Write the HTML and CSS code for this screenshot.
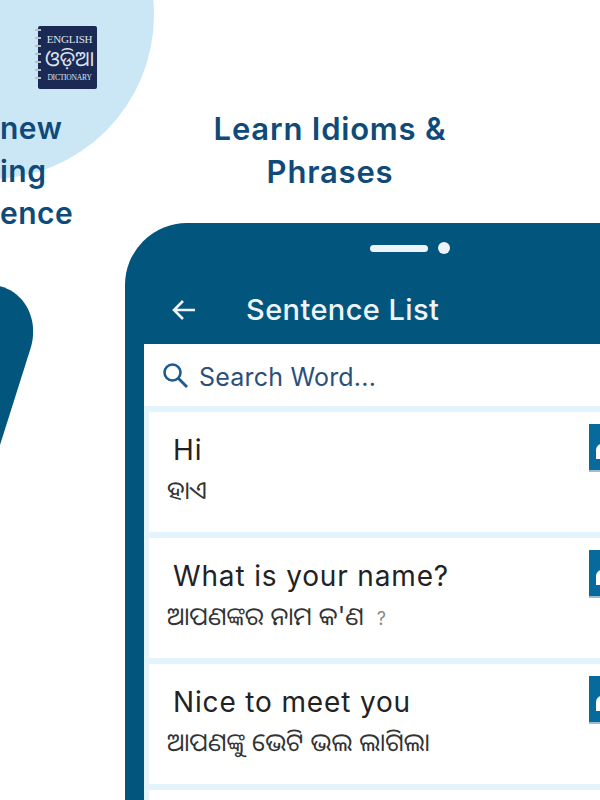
FILE: index.html
```html
<!DOCTYPE html>
<html lang="en">
<head>
    <meta charset="UTF-8">
    <meta name="viewport" content="width=device-width, initial-scale=1.0">
    <title>English Odia Dictionary</title>
    <link rel="stylesheet" href="styles.css">
</head>
<body>
    <div class="stage">
        <div class="circle"></div>
        <div class="prev-phone"></div>

        <div class="book">
            <div class="rings"><i></i><i></i><i></i><i></i><i></i><i></i><i></i></div>
            <div class="book-en">ENGLISH</div>
            <div class="book-or">ଓଡ଼ିଆ</div>
            <div class="book-dict">DICTIONARY</div>
        </div>

        <h2 class="heading heading-prev">new<br>ing<br>ence</h2>

        <div class="column">
            <h2 class="heading">Learn Idioms &amp;<br>Phrases</h2>

            <div class="phone">
                <div class="notch">
                    <span class="pill"></span>
                    <span class="dot"></span>
                </div>
                <div class="app-bar">
                    <svg class="back" width="26" height="24" viewBox="0 0 26 24">
                        <path d="M24 12H3M12 3l-9 9 9 9" fill="none" stroke="#eef3f7" stroke-width="2.6"/>
                    </svg>
                    <span class="app-title">Sentence List</span>
                </div>
                <div class="screen">
                    <div class="search">
                        <svg width="27" height="27" viewBox="0 0 27 27">
                            <circle cx="10.5" cy="10.5" r="8" fill="none" stroke="#1f5a8c" stroke-width="2.6"/>
                            <path d="M16.5 16.5l8.5 8.5" fill="none" stroke="#1f5a8c" stroke-width="2.8"/>
                        </svg>
                        <span class="search-text">Search Word...</span>
                    </div>
                    <div class="list">
                        <div class="card">
                            <div class="en">Hi</div>
                            <div class="or">ହାଏ</div>
                            <div class="speak"><i></i></div>
                        </div>
                        <div class="card">
                            <div class="en">What is your name?</div>
                            <div class="or">ଆପଣଙ୍କର ନାମ କ'ଣ <small>?</small></div>
                            <div class="speak"><i></i></div>
                        </div>
                        <div class="card">
                            <div class="en">Nice to meet you</div>
                            <div class="or">ଆପଣଙ୍କୁ ଭେଟି ଭଲ ଲାଗିଲା</div>
                            <div class="speak"><i></i></div>
                        </div>
                        <div class="card"></div>
                    </div>
                </div>
            </div>
        </div>
    </div>
</body>
</html>
```
FILE: styles.css
```css
html, body {
    margin: 0;
    padding: 0;
    background-color: white;
}

.stage {
    position: relative;
    width: 600px;
    height: 800px;
    overflow: hidden;
    font-family: Inter, "Noto Sans", "Noto Sans Oriya", sans-serif;
}

.circle {
    position: absolute;
    left: -174px;
    top: -149px;
    width: 328px;
    height: 328px;
    border-radius: 50%;
    background-color: #cbe7f6;
}

.prev-phone {
    position: absolute;
    left: -120px;
    top: 285px;
    width: 153px;
    height: 300px;
    background-color: #02557c;
    clip-path: path("M0 0H110C140 0 160 30 151 62L120 160H0Z");
}

.book {
    position: absolute;
    left: 38px;
    top: 26px;
    width: 59px;
    height: 63px;
    box-sizing: border-box;
    padding: 7px 0 0 4px;
    background-color: #1b2a55;
    border-radius: 2px;
    color: #dfe3ec;
    font-family: "Liberation Serif", "Noto Sans Oriya", serif;
    text-align: center;
}

.rings {
    position: absolute;
    left: -3px;
    top: 3px;
    display: flex;
    flex-direction: column;
    gap: 6px;
}

.rings i {
    display: block;
    width: 6px;
    height: 2px;
    background-color: #b9bec9;
}

.book-en {
    font-size: 11px;
    line-height: 12px;
    letter-spacing: -0.2px;
    white-space: nowrap;
}

.book-or {
    font-size: 21px;
    line-height: 28px;
}

.book-dict {
    font-size: 7.5px;
    line-height: 9px;
    letter-spacing: -0.2px;
    white-space: nowrap;
}

.heading {
    margin: 0;
    color: #0f4a78;
    font-size: 31px;
    font-weight: 600;
    line-height: 43px;
    text-align: center;
    letter-spacing: 0.8px;
}

.heading-prev {
    position: absolute;
    top: 107px;
    left: 0;
    font-size: 30px;
    line-height: 42.5px;
    letter-spacing: 0.5px;
    text-align: left;
}

.column {
    position: absolute;
    left: 125px;
    top: 107px;
    width: 600px;
}

.column .heading {
    width: 410px;
}

.phone {
    margin-top: 30px;
    height: 600px;
    padding-left: 19px;
    background-color: #02557c;
    border-radius: 62px 0 0 0;
}

.notch {
    display: flex;
    align-items: center;
    justify-content: center;
    gap: 10px;
    width: 532px;
    padding-top: 20px;
    height: 10px;
}

.pill {
    width: 58px;
    height: 7px;
    border-radius: 4px;
    background-color: #eef3f7;
}

.dot {
    width: 12px;
    height: 12px;
    border-radius: 50%;
    background-color: #eef3f7;
}

.app-bar {
    display: flex;
    align-items: center;
    box-sizing: border-box;
    height: 91px;
    padding-top: 22px;
    color: #eef3f7;
    font-size: 29px;
    font-weight: 500;
    letter-spacing: 0.4px;
}

.back {
    margin-left: 27px;
}

.app-title {
    margin-left: 49px;
}

.screen {
    background-color: white;
}

.search {
    display: flex;
    align-items: center;
    gap: 10px;
    height: 62px;
    padding-left: 18px;
    color: #2b4f7c;
    font-size: 25px;
}

.search-text {
    padding-top: 4px;
    letter-spacing: 0.2px;
}

.list {
    display: flex;
    flex-direction: column;
    gap: 6px;
    padding: 6px 0 0 5px;
    background-color: #e4f4fc;
}

.card {
    position: relative;
    height: 120px;
    background-color: white;
    color: #222;
}

.en {
    padding: 19px 0 0 24px;
    font-size: 28px;
    line-height: 38px;
    letter-spacing: 0.85px;
}

.or {
    padding: 2px 0 0 18px;
    font-size: 25px;
    line-height: 38px;
    color: #333;
}

.or small {
    margin-left: 6px;
    font-size: 18px;
    color: #888;
}

.speak {
    position: absolute;
    left: 440px;
    top: 12px;
    width: 40px;
    height: 46px;
    background-color: #066a9c;
    border-bottom: 2px solid #9fbccd;
}

.speak i {
    position: absolute;
    left: 7px;
    top: 20px;
    width: 12px;
    height: 15px;
    border-radius: 6px 6px 0 0;
    background-color: white;
}
```
